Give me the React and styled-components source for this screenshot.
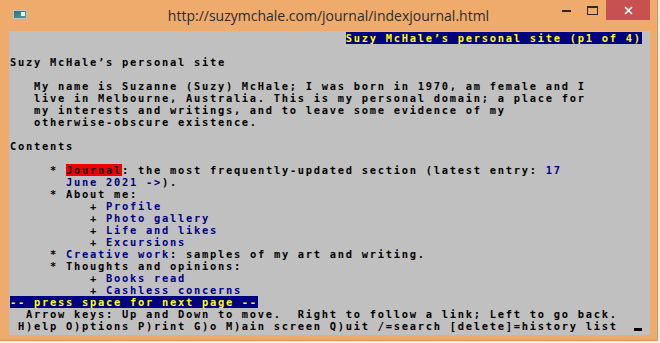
import React from "react";
import styled, { createGlobalStyle } from "styled-components";

const Global = createGlobalStyle`
  html, body { margin: 0; padding: 0; background: #f3f3f3; }
  body { width: 660px; height: 343px; overflow: hidden; }
`;

const Window = styled.div`
  width: 658px;
  height: 341px;
  background: #efab6b;
  border-right: 1px solid #d6945a;
  border-bottom: 1px solid #d6945a;
  box-sizing: border-box;
  display: flex;
  flex-direction: column;
`;

const TitleBar = styled.div`
  height: 31px;
  display: grid;
  grid-template-columns: 1fr auto 1fr;
  align-items: start;
`;

const IconWrap = styled.div`
  padding: 10px 0 0 13px;
  display: flex;
`;

const Title = styled.div`
  font-family: "Open Sans", "Noto Sans", sans-serif;
  font-size: 14px;
  color: #2b2b2b;
  line-height: 18px;
  padding-top: 7px;
  white-space: nowrap;
`;

const Controls = styled.div`
  display: flex;
  justify-content: flex-end;
  padding-right: 7px;
`;

const CtlButton = styled.div`
  width: ${(p) => p.$w}px;
  height: 20px;
  display: flex;
  align-items: center;
  justify-content: center;
  background: ${(p) => (p.$close ? "#c75050" : "transparent")};
`;

const Client = styled.div`
  flex: 1;
  padding: 0 7px 5px 9px;
  display: flex;
`;

const Console = styled.div`
  width: 641px;
  height: 304px;
  background: #c0c0c0;
  box-sizing: border-box;
  padding: 1px 0 0 1px;
  font-family: "DejaVu Sans Mono", "Liberation Mono", monospace;
  font-weight: bold;
  font-size: 10.4px;
  letter-spacing: 1.74px;
  color: #000;
`;

const Row = styled.div`
  height: 12px;
  line-height: 12px;
  white-space: pre;
`;

const Link = styled.span`
  color: #000080;
`;

const Active = styled.span`
  background: #f00000;
  color: #1a0000;
`;

const Hi = styled.span`
  background: #000080;
  color: #ffff00;
`;

const Cursor = styled.span`
  display: inline-block;
  width: 8px;
  height: 12px;
  vertical-align: top;
  box-shadow: inset 0 -3px 0 #000;
  box-sizing: border-box;
  border-bottom: 1px solid transparent;
`;

const ConsoleIcon = () => (
  <svg width="14" height="9" viewBox="0 0 14 9">
    <defs>
      <linearGradient id="cg" x1="0" y1="0" x2="1" y2="1">
        <stop offset="0" stopColor="#2e6f8e" />
        <stop offset="1" stopColor="#49a38a" />
      </linearGradient>
    </defs>
    <rect x="0" y="0" width="14" height="9" fill="#b9c3cc" />
    <rect x="1" y="1" width="12" height="7" fill="url(#cg)" />
    <rect x="8" y="2" width="4" height="4" fill="#f4f4f4" />
  </svg>
);

const App = () => (
  <>
    <Global />
    <Window>
      <TitleBar>
        <IconWrap>
          <ConsoleIcon />
        </IconWrap>
        <Title>http://suzymchale.com/journal/indexjournal.html</Title>
        <Controls>
          <CtlButton $w={26}>
            <svg width="9" height="10" viewBox="0 0 9 10">
              <rect x="0" y="5" width="9" height="2" fill="#2b2b2b" />
            </svg>
          </CtlButton>
          <CtlButton $w={27}>
            <svg width="11" height="9" viewBox="0 0 11 9">
              <rect x="0.5" y="0.5" width="10" height="8" fill="none" stroke="#2b2b2b" />
              <rect x="0" y="0" width="11" height="2" fill="#2b2b2b" />
            </svg>
          </CtlButton>
          <CtlButton $w={44} $close>
            <svg width="9" height="9" viewBox="0 0 9 9">
              <path d="M1 1 L8 8 M8 1 L1 8" stroke="#fff" strokeWidth="1.6" />
            </svg>
          </CtlButton>
        </Controls>
      </TitleBar>
      <Client>
        <Console>
          <Row>{"                                          "}<Hi>Suzy McHale’s personal site (p1 of 4)</Hi></Row>
          <Row> </Row>
          <Row>Suzy McHale’s personal site</Row>
          <Row> </Row>
          <Row>{"   My name is Suzanne (Suzy) McHale; I was born in 1970, am female and I"}</Row>
          <Row>{"   live in Melbourne, Australia. This is my personal domain; a place for"}</Row>
          <Row>{"   my interests and writings, and to leave some evidence of my"}</Row>
          <Row>{"   otherwise-obscure existence."}</Row>
          <Row> </Row>
          <Row>Contents</Row>
          <Row> </Row>
          <Row>{"     * "}<Active>Journal</Active>{": the most frequently-updated section (latest entry: "}<Link>17</Link></Row>
          <Row>{"       "}<Link>June 2021 -&gt;</Link>{")."}</Row>
          <Row>{"     * About me:"}</Row>
          <Row>{"          + "}<Link>Profile</Link></Row>
          <Row>{"          + "}<Link>Photo gallery</Link></Row>
          <Row>{"          + "}<Link>Life and likes</Link></Row>
          <Row>{"          + "}<Link>Excursions</Link></Row>
          <Row>{"     * "}<Link>Creative work</Link>{": samples of my art and writing."}</Row>
          <Row>{"     * Thoughts and opinions:"}</Row>
          <Row>{"          + "}<Link>Books read</Link></Row>
          <Row>{"          + "}<Link>Cashless concerns</Link></Row>
          <Row><Hi>-- press space for next page --</Hi></Row>
          <Row>{"  Arrow keys: Up and Down to move.  Right to follow a link; Left to go back."}</Row>
          <Row>{" H)elp O)ptions P)rint G)o M)ain screen Q)uit /=search [delete]=history list  "}<Cursor /></Row>
        </Console>
      </Client>
    </Window>
  </>
);

export default App;
